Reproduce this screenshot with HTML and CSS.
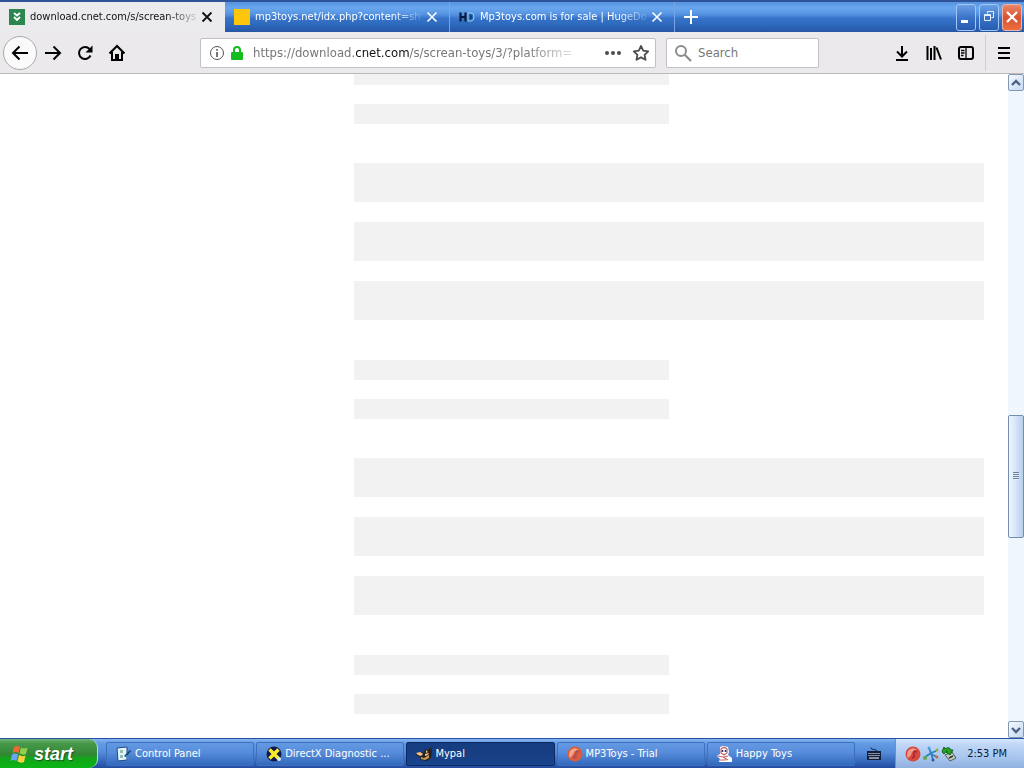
FILE: index.html
```html
<!DOCTYPE html>
<html lang="en">
<head>
<meta charset="utf-8">
<title>download.cnet.com/s/screan-toys</title>
<link rel="stylesheet" href="styles.css">
</head>
<body>
<header class="tabbar">
  <div class="tabs" role="tablist">
    <div class="tab tab-active">
      <svg class="icon16" viewBox="0 0 16 16"><rect width="16" height="16" fill="#2b8650"/><path d="M5 4l3 2.500 3-2.500M5 8l3 3 3-3" fill="none" stroke="#fff" stroke-width="1.800"/></svg>
      <button class="tab-title" role="tab" aria-selected="true">download.cnet.com/s/screan-toys</button>
      <button class="tab-close" aria-label="Close tab"><svg class="icon12" viewBox="0 0 12 12"><path d="M1.500 1.500l9 9M10.500 1.500l-9 9" fill="none" stroke="currentColor" stroke-width="1.800"/></svg></button>
    </div>
    <div class="tab">
      <svg class="icon16" viewBox="0 0 16 16"><rect width="16" height="16" fill="#fdc50c"/></svg>
      <button class="tab-title" role="tab">mp3toys.net/idx.php?content=sh</button>
      <button class="tab-close" aria-label="Close tab"><svg class="icon12" viewBox="0 0 12 12"><path d="M1.500 1.500l9 9M10.500 1.500l-9 9" fill="none" stroke="currentColor" stroke-width="1.600"/></svg></button>
    </div>
    <div class="tab">
      <svg class="icon16" viewBox="0 0 16 16"><path d="M1.500 3.500v9M6.500 3.500v9M1.500 8h5" fill="none" stroke="#0b1b3c" stroke-width="2.200"/><path d="M9 4h3q3 0 3 4t-3 4H9z" fill="#2467b8" stroke="#9ed5fa"/><path d="M11 6v4h1q1 0 1-2t-1-2z" fill="#163c78"/></svg>
      <button class="tab-title" role="tab">Mp3toys.com is for sale | HugeDo</button>
      <button class="tab-close" aria-label="Close tab"><svg class="icon12" viewBox="0 0 12 12"><path d="M1.500 1.500l9 9M10.500 1.500l-9 9" fill="none" stroke="currentColor" stroke-width="1.600"/></svg></button>
    </div>
    <button class="new-tab" aria-label="New tab"><svg class="icon16" viewBox="0 0 16 16"><path d="M8 1v14M1 8h14" stroke="#fff" stroke-width="2"/></svg></button>
  </div>
  <div class="window-buttons">
    <button class="win" aria-label="Minimize"><svg class="icon16" viewBox="0 0 16 16"><path d="M3 12.500h7" stroke="#fff" stroke-width="3"/></svg></button>
    <button class="win" aria-label="Restore"><svg class="icon16" viewBox="0 0 16 16"><path d="M6.500 4.500V2.500h6v6h-2M3.500 5.500h6v6h-6zM3.500 6.500h6" fill="none" stroke="#e6f0fc"/></svg></button>
    <button class="win win-close" aria-label="Close"><svg class="icon16" viewBox="0 0 16 16"><path d="M3 3l10 10M13 3L3 13" stroke="#fff" stroke-width="2.200"/></svg></button>
  </div>
</header>

<nav class="toolbar">
  <div class="nav-buttons">
    <button class="tool back" aria-label="Back"><svg class="icon18" viewBox="0 0 18 18"><path d="M17 9H2M8.500 2.500L2 9l6.500 6.500" class="line"/></svg></button>
    <button class="tool" aria-label="Forward"><svg class="icon18" viewBox="0 0 18 18"><path d="M1 9h15M9.500 2.500L16 9l-6.500 6.500" class="line"/></svg></button>
    <button class="tool" aria-label="Reload"><svg class="icon18" viewBox="0 0 18 18"><path d="M14.500 11.500A6 6 0 1 1 13.500 5" class="line"/><path d="M16.500 1.500v7h-7z"/></svg></button>
    <button class="tool" aria-label="Home"><svg class="icon18" viewBox="0 0 18 18"><path d="M1.500 9.500L9 2l7.500 7.500M4 8v8h10V8" class="line"/><path d="M7 16v-6h4v6z"/></svg></button>
  </div>
  <div class="urlbar">
    <svg class="icon16" viewBox="0 0 16 16"><circle cx="8" cy="8" r="6.500" fill="none" stroke="#555"/><path d="M8 7v5M8 4v1.700" stroke="#555" stroke-width="1.600"/></svg>
    <svg class="icon16 lock" viewBox="0 0 16 16"><rect x="2" y="7" width="12" height="8" rx="1" fill="#12bc1c"/><path d="M5 8V5a3 3 0 0 1 6 0v3" fill="none" stroke="#12bc1c" stroke-width="2"/></svg>
    <div class="url" role="textbox" aria-label="Address" tabindex="0">https://download.<span class="domain">cnet.com</span>/s/screan-toys/3/?platform=</div>
    <button class="tool small" aria-label="Page actions"><svg class="icon18" viewBox="0 0 18 18" fill="#4c4c4c"><circle cx="3" cy="9" r="2"/><circle cx="9" cy="9" r="2"/><circle cx="15" cy="9" r="2"/></svg></button>
    <button class="tool small" aria-label="Bookmark"><svg class="icon18" viewBox="0 0 18 18"><path d="M9 2l2.200 4.600 5 .7-3.600 3.500.9 5L9 13.400l-4.500 2.400.9-5L1.800 7.300l5-.7z" fill="none" stroke="#4c4c4c" stroke-width="1.800" stroke-linejoin="round"/></svg></button>
  </div>
  <label class="searchbar">
    <svg class="icon18" viewBox="0 0 18 18"><circle cx="7" cy="7" r="5" fill="none" stroke="#8c8c8c" stroke-width="2"/><path d="M10.500 10.500L17 17" stroke="#8c8c8c" stroke-width="2.200"/></svg>
    <input type="text" placeholder="Search" aria-label="Search">
  </label>
  <div class="tools">
    <button class="tool" aria-label="Downloads"><svg class="icon16" viewBox="0 0 16 16"><path d="M8 1v10M3 6.500l5 5 5-5M2 15h12" class="line"/></svg></button>
    <button class="tool" aria-label="Library"><svg class="icon16" viewBox="0 0 16 16"><path d="M1.500 1v14M5 3v12M8.500 1v14M10.500 2.500L15 14.500" class="line"/></svg></button>
    <button class="tool" aria-label="Sidebars"><svg class="icon16" viewBox="0 0 16 16"><rect x="1" y="2" width="14" height="12" rx="2" class="line"/><path d="M8 2v12M3 5.500h3.500M3 8h3.500M3 10.500h2.500" fill="none" stroke="#000" stroke-width="1.300"/></svg></button>
  </div>
  <button class="tool menu" aria-label="Menu"><svg class="icon16" viewBox="0 0 16 16"><path d="M2 3h12M2 8h12M2 13h12" class="line"/></svg></button>
</nav>

<div class="viewport">
  <main class="page">
    <div class="results">
      <section class="group"><div class="short"></div><div class="short"></div><div class="long"></div><div class="long"></div><div class="long"></div></section>
      <section class="group"><div class="short"></div><div class="short"></div><div class="long"></div><div class="long"></div><div class="long"></div></section>
      <section class="group"><div class="short"></div><div class="short"></div></section>
    </div>
  </main>
  <div class="scrollbar">
    <button class="arrow" aria-label="Scroll up"><svg class="icon12" viewBox="0 0 12 12"><path d="M2 8l4-4 4 4" fill="none" stroke="#4d6185" stroke-width="2.400"/></svg></button>
    <div class="track"><div class="before"></div><div class="thumb"><i class="grip"></i></div><div class="after"></div></div>
    <button class="arrow" aria-label="Scroll down"><svg class="icon12" viewBox="0 0 12 12"><path d="M2 4l4 4 4-4" fill="none" stroke="#4d6185" stroke-width="2.400"/></svg></button>
  </div>
</div>

<footer class="taskbar">
  <button class="start">
    <svg class="flag" viewBox="0 0 20 20"><path d="M4 3q3-2 6 0L8.500 9q-3-2-6 0z" fill="#ef6a32"/><path d="M11 3.500q3 2 6.500 0L16 10q-3 1.500-6.500-.5z" fill="#8fd24a"/><path d="M2 10.500q3-2 6 0L6.500 17q-3-2-6 0z" fill="#6ba5f4"/><path d="M9 11q3 2 6.500.5L14 18q-3 1.500-6.500-.5z" fill="#fdd23a"/></svg>
    <span>start</span>
  </button>
  <div class="tasks">
    <button class="task"><svg class="icon16" viewBox="0 0 16 16"><path d="M1 2l10-1v13l-9 1z" fill="#e4f2fb" stroke="#1f4a86"/><path d="M4 4h3v3H4zM4 9h3v3H4z" fill="#8fc0b4"/><path d="M8 10l6-6 1 1-5 6z" fill="#163f75"/><path d="M10 9h5v3l-4 2z" fill="#4c83c4"/></svg><span>Control Panel</span></button>
    <button class="task"><svg class="icon16" viewBox="0 0 16 16"><circle cx="8" cy="8" r="7.500" fill="#10184c"/><path d="M3.500 3.500l9 9M12.500 3.500l-9 9" stroke="#f7ec25" stroke-width="3.500"/><circle cx="13" cy="13" r="2" fill="#d8e6fa"/></svg><span>DirectX Diagnostic ...</span></button>
    <button class="task task-active"><svg class="icon16" viewBox="0 0 16 16"><path d="M0 7l4-1 3 1 3-4 2 1 3-3 1 5-1 6-4 3-6-1-1-3-4-2z" fill="#2b211c"/><path d="M0 7l4-1 3 2-2 2-3-1zM10 4l2 2-2 1zM9 8l4-1-1 2-3 1z" fill="#edc48b"/><path d="M5 11l3 1 5-3v3l-4 2-4-1z" fill="#c99754"/></svg><span>Mypal</span></button>
    <button class="task"><svg class="icon16" viewBox="0 0 16 16"><circle cx="8" cy="8" r="7.500" fill="#df5a38"/><path d="M3 5q4-5 9-1-5 0-6 5l-3 3Q1 9 3 5z" fill="#f5a38a"/><path d="M9 5v6M9 5l3 1" fill="none" stroke="#a45058" stroke-width="1.500"/><circle cx="7.500" cy="11" r="2" fill="#b4505c"/></svg><span>MP3Toys - Trial</span></button>
    <button class="task"><svg class="icon16" viewBox="0 0 16 16"><path d="M3 1l3-1 5 1 1 5-1 3 4 3v4H2l1-3-3-3 3-2z" fill="#fff"/><path d="M4 3q3-3 6 0v4l-3 2-3-2zM1 10l5 1 5 3M7 11l4-1M3 14h6" fill="none" stroke="#c4606c" stroke-width="1.200"/><circle cx="5.500" cy="5" r="1" fill="#1b2a68"/><circle cx="8.500" cy="5" r="1" fill="#1b2a68"/></svg><span>Happy Toys</span></button>
  </div>
  <button class="keyboard" aria-label="On-screen keyboard"><svg class="icon16" viewBox="0 0 16 16"><path d="M5 1.500q0 2 3 2t3 2" fill="none" stroke="#172a4e"/><path d="M1 5h14v9H1z" fill="#101f3e"/><path d="M2.500 7.500h11M2.500 9.500h11" stroke="#fff" stroke-dasharray="1 1"/><path d="M3 12h10" stroke="#fff"/></svg></button>
  <div class="tray">
    <svg class="icon16" viewBox="0 0 16 16"><circle cx="8" cy="8" r="7.500" fill="#d8493c"/><path d="M3 5q4-5 9-1-5 0-6 5l-3 3Q1 9 3 5z" fill="#f19b8a"/><path d="M9 5v6l-2 1M9 5l3 1" fill="none" stroke="#a72634" stroke-width="1.500"/></svg>
    <svg class="icon16" viewBox="0 0 16 16"><path d="M6 2l2 5 5-2M8 7l-6 4M8 7l2 7M8 8l6 3" fill="none" stroke="#2e83bd" stroke-width="1.800"/><circle cx="6" cy="2" r="1.500" fill="#41a6dc"/><circle cx="14" cy="4" r="1.500" fill="#8aaf3d"/><circle cx="2" cy="12" r="2" fill="#64a64a"/><circle cx="10" cy="14" r="1.500" fill="#225e9c"/><circle cx="14" cy="11" r="1.500" fill="#c56a3f"/></svg>
    <svg class="icon16" viewBox="0 0 16 16"><path d="M4 9l7-3 4 6-6 3z" fill="#c5cec2" stroke="#4d5a50"/><path d="M1 6l2-5 1 2q4-3 6 1l2 0-3 5-4-3 2 0q-2-2-4 2z" fill="#24a427" stroke="#14601a"/><path d="M8 12l4-2" stroke="#333" stroke-width="1.500"/></svg>
    <time>2:53 PM</time>
  </div>
</footer>
</body>
</html>
```
FILE: styles.css
```css
* { box-sizing: border-box; }
body {
  margin: 0;
  height: 100vh;
  display: flex;
  flex-direction: column;
  overflow: hidden;
  background: #fff;
  color: #111;
  font: 11px/16px Tahoma, "DejaVu Sans Condensed", "Noto Sans", sans-serif;
}
button, input { font: inherit; color: inherit; }
button { padding: 0; border: 0; background: none; display: flex; align-items: center; justify-content: center; }
svg { display: block; flex: none; }
.icon12 { width: 12px; height: 12px; }
.icon16 { width: 16px; height: 16px; }
.icon18 { width: 18px; height: 18px; }
.line { fill: none; stroke: #000; stroke-width: 2; }

.tabbar {
  display: flex;
  flex: none;
  height: 32px;
  border-top: 2px solid #2e5398;
  background: linear-gradient(#5793df, #68a6ee 20%, #5795e3 40%, #3674ca 55%, #2c66b8 80%, #2856a5);
}
.tabs { display: flex; flex: 1; min-width: 0; }
.tab {
  display: flex;
  align-items: center;
  flex: 0 1 225px;
  min-width: 0;
  gap: 5px;
  padding: 0 11px 0 9px;
  border-right: 1px solid #75a5e2;
  color: #fff;
}
.tab-active { padding-right: 12px; background: #ebebed; color: #111; border-right: 0; }
.tab-title {
  display: block;
  flex: 1;
  min-width: 0;
  overflow: hidden;
  white-space: nowrap;
  text-align: left;
  mask-image: linear-gradient(90deg, #000 calc(100% - 28px), rgba(0, 0, 0, 0.150));
}
.new-tab { width: 32px; }
.window-buttons { display: flex; align-items: center; gap: 3px; padding-right: 2px; }
.win {
  width: 20px;
  height: 27px;
  border: 1px solid #a1c7f4;
  border-radius: 3px;
  background: linear-gradient(#6ba0e6, #3a74c9 50%, #275bb0);
}
.win-close { border-color: #edb6a8; background: linear-gradient(#e88868, #d95231 50%, #ec6e3f); }

.toolbar {
  display: flex;
  align-items: center;
  flex: none;
  height: 42px;
  padding: 0 3px;
  border-bottom: 1px solid #bcbabd;
  background: #ebe9ec;
}
.nav-buttons { display: flex; align-items: center; flex: none; width: 197px; }
.tool { flex: none; width: 32px; height: 32px; }
.back { width: 34px; height: 34px; border: 1px solid #a9a9ad; border-radius: 50%; background: #fafafa; }
.urlbar, .searchbar { display: flex; align-items: center; height: 30px; border: 1px solid #c1c0c3; border-radius: 2px; background: #fff; font-size: 13px; }
.urlbar { flex: 1; min-width: 0; padding-left: 8px; }
.lock { margin: 0 8px 0 4px; }
.url {
  flex: 1;
  min-width: 0;
  overflow: hidden;
  white-space: nowrap;
  color: #777;
  mask-image: linear-gradient(90deg, #000 calc(100% - 48px), rgba(0, 0, 0, 0.200));
}
.domain { color: #111; }
.small { width: 28px; }
.small:first-of-type { margin-left: 26px; }
.searchbar { flex: 0 1 153px; min-width: 0; margin-left: 10px; padding-left: 7px; gap: 4px; }
.searchbar input { flex: 1; width: 0; min-width: 0; border: 0; outline: 0; background: none; }
.searchbar input::placeholder { color: #777; opacity: 1; }
.tools { display: flex; margin-left: 67px; padding-right: 3px; }
.menu { width: 36px; height: 36px; border-left: 1px solid #d0ced1; }

.viewport { display: flex; flex: 1; min-height: 0; }
.page { flex: 1; min-width: 0; overflow: hidden; padding: 0 24px 0 354px; }
.results { margin-top: -9px; }
.group { padding-bottom: 40px; }
.short { width: 50%; height: 20px; margin-bottom: 19px; background: #f2f2f2; }
.short + .long { margin-top: 39px; }
.long { height: 39px; margin-top: 20px; background: #f2f2f2; }
.scrollbar { display: flex; flex-direction: column; flex: none; width: 16px; background: #eff6fd; }
.arrow { flex: none; width: 16px; height: 17px; border: 1px solid #8299b4; border-radius: 2px; background: linear-gradient(135deg, #f5faff, #c6d8ef); }
.track { display: flex; flex-direction: column; flex: 1; }
.before { flex: 325; }
.after { flex: 184; }
.thumb {
  display: flex;
  align-items: center;
  justify-content: center;
  flex: 121;
  border: 1px solid #728faf;
  border-radius: 2px;
  background: linear-gradient(90deg, #eff6ff, #d5e4f8 50%, #b9cfea);
}
.grip { width: 6px; height: 8px; background: repeating-linear-gradient(#6580a3 0 1px, #e7f1fd 1px 2px); }

.taskbar {
  display: flex;
  flex: none;
  height: 30px;
  border-top: 1px solid #2951a3;
  background: linear-gradient(#83b5f1, #649be4 15%, #558cdb 45%, #3164b8 80%, #234b9f);
  color: #fff;
}
.start {
  flex: none;
  width: 98px;
  gap: 4px;
  padding-right: 14px;
  border-right: 1px solid #b1ddd0;
  border-radius: 0 9px 9px 0;
  background: linear-gradient(#6fb377, #48984a 15%, #318734 55%, #12a51c 65%, #0bb414);
  font: italic bold 18px/24px "Liberation Sans", Arial, sans-serif;
  text-shadow: 1px 1px 1px #235022;
}
.flag { width: 20px; height: 20px; }
.tasks { display: flex; flex: 1; min-width: 0; gap: 2px; padding: 3px 0 2px 8px; }
.task {
  flex: 1;
  min-width: 0;
  justify-content: flex-start;
  gap: 3px;
  padding-left: 9px;
  border: 1px solid #3e70bd;
  border-radius: 2px;
  background: linear-gradient(#649ae3, #568bda 45%, #3369bc);
  white-space: nowrap;
  overflow: hidden;
}
.task-active { border-color: #0c2963; background: linear-gradient(#163d80, #183f84 60%, #16458f); }
.keyboard { flex: none; width: 38px; margin-right: 2px; }
.tray {
  display: flex;
  align-items: center;
  justify-content: flex-end;
  flex: none;
  gap: 2px;
  width: 129px;
  padding-right: 17px;
  border-left: 1px solid #6d92c7;
  background: linear-gradient(#d6e7fb, #bfd6f5 20%, #a9c7ef 60%, #8fb0df);
  color: #0b1a33;
}
.tray time { margin-left: 8px; white-space: nowrap; }
```
